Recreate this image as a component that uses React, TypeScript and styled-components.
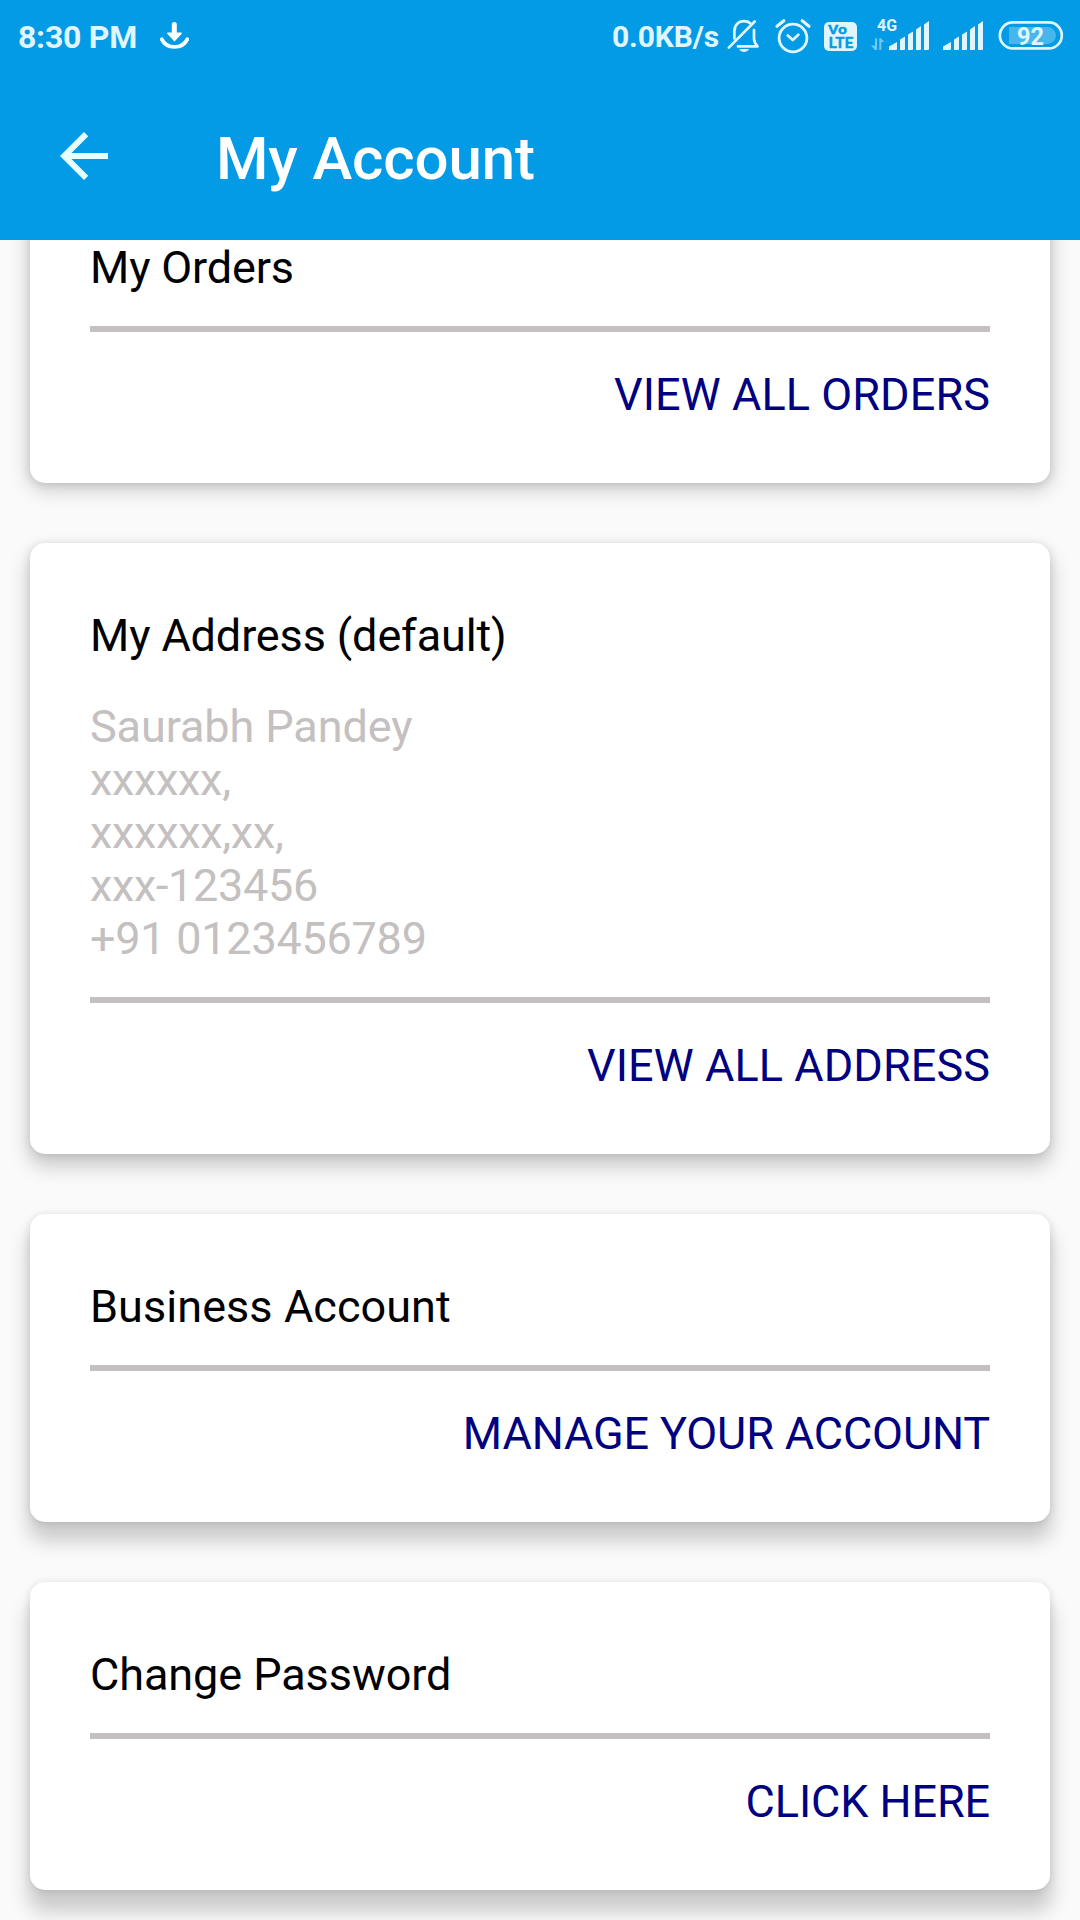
import React from "react";
import styled, { createGlobalStyle } from "styled-components";

const GlobalStyle = createGlobalStyle`
  * { box-sizing: border-box; }
  body {
    margin: 0;
    background: #fafafa;
    font-family: Roboto, "Noto Sans", sans-serif;
  }
`;

const Screen = styled.div`
  display: flex;
  flex-direction: column;
  width: 1080px;
  height: 1920px;
  overflow: hidden;
  background: #fafafa;
`;

const Header = styled.header`
  flex: none;
  height: 240px;
  background: #039be6;
`;

const StatusBar = styled.div`
  display: flex;
  align-items: center;
  justify-content: space-between;
  height: 72px;
  padding: 0 17px 0 18px;
  color: #e1f5fe;
`;

const StatusGroup = styled.div`
  display: flex;
  align-items: center;
`;

const StatusText = styled.span<{ $size: number; $width: number; $tracking: number }>`
  width: ${(p) => p.$width}px;
  padding-top: 2px;
  font-size: ${(p) => p.$size}px;
  line-height: 38px;
  font-weight: 700;
  letter-spacing: ${(p) => p.$tracking}px;
  white-space: nowrap;
`;

const StatusIcon = styled.svg<{ $gap?: number }>`
  display: block;
  flex: none;
  margin-left: ${(p) => p.$gap ?? 0}px;
  overflow: visible;
  font-family: Roboto, sans-serif;
  font-weight: 700;
`;

const AppBar = styled.div`
  display: flex;
  align-items: center;
  height: 168px;
  padding: 0 48px;
  gap: 96px;
`;

const BackButton = styled.button`
  display: block;
  width: 72px;
  height: 72px;
  padding: 0;
  border: 0;
  background: none;
  color: #e6ffff;
`;

const PageTitle = styled.h1`
  margin: 0;
  padding-top: 6px;
  color: #fff;
  font-size: 60px;
  line-height: 70px;
  font-weight: 500;
  letter-spacing: -0.12px;
  white-space: nowrap;
`;

const Content = styled.main`
  display: flex;
  flex: none;
  flex-direction: column;
  gap: 60px;
  height: 1680px;
  padding: 0 30px;
  overflow: hidden;
`;

const Card = styled.section<{ $drop: number; $scrolled?: number }>`
  flex: none;
  margin-top: ${(p) => -(p.$scrolled ?? 0)}px;
  padding: 60px;
  border-radius: 15px;
  background: #fff;
  box-shadow:
    0 ${(p) => p.$drop}px 19px 2px rgba(0, 0, 0, 0.19),
    0 1px 8px rgba(0, 0, 0, 0.12);
`;

const textBlock = `
  margin: 0;
  padding: 6px 0 2px;
  font-size: 45px;
  line-height: 53px;
  font-weight: 400;
`;

const CardTitle = styled.h2<{ $tracking?: number }>`
  ${textBlock}
  color: #000;
  letter-spacing: ${(p) => p.$tracking ?? 0}px;
`;

const Address = styled.address`
  ${textBlock}
  margin-top: 30px;
  color: #c4c0c0;
  font-style: normal;
`;

const AddressLine = styled.div<{ $tracking: number }>`
  height: 53px;
  letter-spacing: ${(p) => p.$tracking}px;
`;

const Divider = styled.hr`
  height: 6px;
  margin: 30px 0;
  border: 0;
  background: #c4c0c0;
`;

const CardAction = styled.a<{ $tracking?: number }>`
  ${textBlock}
  display: block;
  color: #000080;
  text-align: right;
  text-decoration: none;
  letter-spacing: ${(p) => p.$tracking ?? 0}px;
`;

const DownloadIcon = () => (
  <StatusIcon width="30" height="28" viewBox="160 22 30 28" fill="none">
    <path d="M174.3 24.5V34" stroke="#fff" strokeWidth="5" strokeLinecap="round" />
    <path d="M167.8 33.2H181.2L174.5 40.6Z" fill="#fff" stroke="#fff" strokeWidth="1.4" strokeLinejoin="round" />
    <path d="M161.8 39.3C164 43.8 168 46.9 174.5 46.9S185 43.8 187.2 39.3" stroke="#fff" strokeWidth="3.8" strokeLinecap="round" />
  </StatusIcon>
);

const SilentIcon = () => (
  <StatusIcon $gap={7} width="33" height="34" viewBox="727 19 33 34" fill="none" stroke="currentColor" strokeWidth="2.7" strokeLinecap="round" strokeLinejoin="round">
    <path d="M734.4 38.5V31C734.4 25 738.5 21.2 744 21.2C746.5 21.2 748.5 21.8 750.2 23.2" />
    <path d="M738 46.4H757.5C755 43.5 754 42 754 38.5V30" />
    <path d="M754.7 21.5L728.8 47.6" />
    <path d="M739.3 49H749C747.8 51.2 746.2 52 744.1 52S740.4 51.2 739.3 49Z" fill="currentColor" stroke="none" />
  </StatusIcon>
);

const AlarmIcon = () => (
  <StatusIcon $gap={15} width="36" height="34" viewBox="775 19 36 34" fill="none" stroke="currentColor" strokeWidth="2.8" strokeLinecap="round" strokeLinejoin="round">
    <circle cx="793" cy="38" r="13.9" />
    <path d="M787.8 35.5L792.8 40L798.3 34.8" />
    <path d="M777 26.2L783.8 20.8M802.2 20.8L809 26.2" strokeWidth="3.2" />
  </StatusIcon>
);

const VolteIcon = () => (
  <StatusIcon $gap={13} width="33" height="30" viewBox="824 21 33 30">
    <rect x="824" y="22" width="33" height="29" rx="5" fill="currentColor" />
    <g fill="#039be6" stroke="#039be6" strokeWidth="0.3">
      <text x="828" y="34.4" fontSize="12.5" textLength="19" lengthAdjust="spacingAndGlyphs">Vo</text>
      <text x="828.8" y="47.6" fontSize="14" textLength="24.5" lengthAdjust="spacingAndGlyphs">LTE</text>
    </g>
  </StatusIcon>
);

const SignalBars = ({ x }: { x: number }) => (
  <path
    transform={`translate(${x} 21)`}
    fill="currentColor"
    d="M0 29V25.5L8 21V28Q8 29 7 29ZM11 29V18.5L16 15.5V28Q16 29 15 29ZM19 29V13.5L24 10.5V28Q24 29 23 29ZM27 29V8.5L32 5V28Q32 29 31 29ZM35 29V3.5L40 0V28Q40 29 39 29Z"
  />
);

const MobileSignalIcon = () => (
  <StatusIcon $gap={14} width="58" height="34" viewBox="871 19 58 34">
    <text x="877" y="31.3" fontSize="16.5" textLength="20" lengthAdjust="spacingAndGlyphs" fill="currentColor">4G</text>
    <path d="M875 38.2H877V50H875L871 45.6H875ZM879.3 50V38.2H880.8L884.3 42H881.3V50Z" fill="currentColor" opacity="0.5" />
    <SignalBars x={889} />
  </StatusIcon>
);

const SignalIcon = () => (
  <StatusIcon $gap={14} width="40" height="34" viewBox="943 19 40 34">
    <SignalBars x={943} />
  </StatusIcon>
);

const BatteryIcon = () => (
  <StatusIcon $gap={15} width="65" height="30" viewBox="998 21 65 30">
    <rect x="999.9" y="22.4" width="61.9" height="26" rx="13" fill="none" stroke="currentColor" strokeWidth="2.7" />
    <path d="M1009 27H1047.5A8.5 8.5 0 0 1 1047.5 44H1009Z" fill="currentColor" opacity="0.3" />
    <text x="1030.5" y="44.9" fontSize="26.5" textAnchor="middle" textLength="27" lengthAdjust="spacingAndGlyphs" fill="currentColor">92</text>
  </StatusIcon>
);

export default function App() {
  return (
    <>
      <GlobalStyle />
      <Screen>
        <Header>
          <StatusBar>
            <StatusGroup>
              <StatusText $size={32} $width={142} $tracking={-0.25}>8:30 PM</StatusText>
              <DownloadIcon />
            </StatusGroup>
            <StatusGroup>
              <StatusText $size={30} $width={108} $tracking={-0.12}>0.0KB/s</StatusText>
              <SilentIcon />
              <AlarmIcon />
              <VolteIcon />
              <MobileSignalIcon />
              <SignalIcon />
              <BatteryIcon />
            </StatusGroup>
          </StatusBar>
          <AppBar>
            <BackButton aria-label="Back">
              <svg width="72" height="72" viewBox="0 0 24 24" fill="currentColor">
                <path d="M20 11H7.83l5.59-5.59L12 4l-8 8 8 8 1.41-1.41L7.83 13H20v-2z" />
              </svg>
            </BackButton>
            <PageTitle>My Account</PageTitle>
          </AppBar>
        </Header>
        <Content>
          <Card $drop={5} $scrolled={65}>
            <CardTitle $tracking={-0.15}>My Orders</CardTitle>
            <Divider />
            <CardAction $tracking={0.08}>VIEW ALL ORDERS</CardAction>
          </Card>
          <Card $drop={11}>
            <CardTitle $tracking={-0.12}>My Address (default)</CardTitle>
            <Address>
              <AddressLine $tracking={-0.1}>Saurabh Pandey</AddressLine>
              <AddressLine $tracking={-0.3}>xxxxxx,</AddressLine>
              <AddressLine $tracking={-0.28}>xxxxxx,xx,</AddressLine>
              <AddressLine $tracking={-0.33}>xxx-123456</AddressLine>
              <AddressLine $tracking={-0.25}>+91 0123456789</AddressLine>
            </Address>
            <Divider />
            <CardAction $tracking={0.08}>VIEW ALL ADDRESS</CardAction>
          </Card>
          <Card $drop={17}>
            <CardTitle $tracking={0.06}>Business Account</CardTitle>
            <Divider />
            <CardAction $tracking={-0.13}>MANAGE YOUR ACCOUNT</CardAction>
          </Card>
          <Card $drop={20}>
            <CardTitle $tracking={-0.08}>Change Password</CardTitle>
            <Divider />
            <CardAction $tracking={-0.1}>CLICK HERE</CardAction>
          </Card>
        </Content>
      </Screen>
    </>
  );
}
